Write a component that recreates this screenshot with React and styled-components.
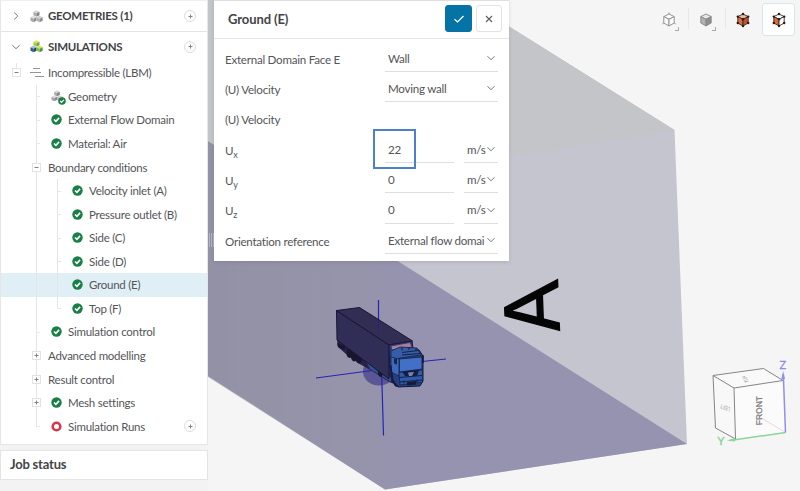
import React from "react";
import styled, { createGlobalStyle, css } from "styled-components";

const GlobalStyle = createGlobalStyle`
  * { box-sizing: border-box; }
  html, body { margin: 0; padding: 0; }
  body {
    font-family: Lato, "Liberation Sans", sans-serif;
    font-size: 11.5px;
    letter-spacing: -0.25px;
    color: #555559;
    background: #f5f5f5;
  }
`;

const Workbench = styled.div`
  position: relative;
  display: flex;
  width: 800px;
  height: 491px;
  overflow: hidden;
  background: #f5f5f5;
`;

/* ---------- sidebar ---------- */

const Sidebar = styled.aside`
  position: relative;
  display: flex;
  flex-direction: column;
  gap: 5px;
  width: 208px;
  height: 100%;
  background: #f3f3f3;
`;

const TreePanel = styled.section`
  height: 445px;
  background: #fff;
  border: 1px solid #e6e6e7;
  border-top-color: #eeeeef;
`;

const JobPanel = styled.section`
  display: flex;
  align-items: center;
  height: 30px;
  padding: 0 8px 2px 9px;
  background: #fff;
  border: 1px solid #e4e4e5;
  font-size: 13px;
  font-weight: 700;
  letter-spacing: -0.2px;
  color: #434347;
`;

const SectionHeader = styled.header`
  display: flex;
  align-items: center;
  height: ${(p) => (p.$divided ? 31 : 29)}px;
  padding-right: 11px;
  border-bottom: ${(p) => (p.$divided ? "1px solid #e4e4e6" : "0")};
  font-weight: 700;
  color: #434347;
`;

const HeaderToggle = styled.span`
  display: flex;
  justify-content: center;
  width: 29px;
`;

const HeaderIcon = styled.span`
  display: flex;
  width: 18px;
`;

const HeaderLabel = styled.span`
  flex: 1;
  padding-bottom: 1px;
`;

const AddCircle = styled.span`
  display: flex;
  align-items: center;
  justify-content: center;
  width: 12px;
  height: 12px;
  border: 1px solid #dcdcde;
  border-radius: 50%;
`;

const TreeBody = styled.div`
  display: flex;
  flex-direction: column;
`;

const TreeRow = styled.div`
  display: flex;
  align-items: center;
  height: 23.57px;
  padding-right: 11px;
  background: ${(p) => (p.$selected ? "#e0eff5" : "transparent")};
`;

const Guide = styled.span`
  position: relative;
  display: flex;
  align-items: center;
  justify-content: center;
  width: ${(p) => p.$width}px;
  height: 100%;
  padding: 0 ${(p) => p.$padRight || 0}px 0 ${(p) => p.$padLeft || 0}px;
  ${(p) =>
    p.$line &&
    css`
      &::before {
        content: "";
        position: absolute;
        left: ${p.$at}px;
        top: ${p.$line === "stub" ? "2px" : "0"};
        bottom: ${p.$line === "full" ? "0" : "50%"};
        width: 1px;
        background: #e4e5e7;
      }
    `}
  ${(p) =>
    p.$tick &&
    css`
      &::after {
        content: "";
        position: absolute;
        left: ${p.$at}px;
        top: 50%;
        width: 4px;
        height: 1px;
        background: #e6e7e9;
      }
    `}
`;

const Expander = styled.span`
  position: relative;
  z-index: 1;
  display: flex;
  align-items: center;
  justify-content: center;
  width: 9px;
  height: 9px;
  background: #fff;
  border: 1px solid #e1e2e4;
`;

const StatusSlot = styled.span`
  display: flex;
  width: ${(p) => p.$width || 17}px;
`;

const RowLabel = styled.span`
  flex: 1;
  margin-left: ${(p) => (p.$tight ? -3 : 0)}px;
  white-space: nowrap;
`;

/* ---------- settings panel ---------- */

const ResizeGutter = styled.div`
  position: relative;
  display: flex;
  align-items: center;
  justify-content: center;
  gap: 1px;
  width: 6px;
  height: 480px;
`;

const GripBar = styled.i`
  width: 1px;
  height: 14px;
  background: #b3b3c1;
`;

const SettingsPanel = styled.section`
  position: relative;
  width: 294.5px;
  height: 261px;
  background: #fff;
  border-top: 1px solid #dfdfe1;
  box-shadow: 0 1px 4px rgba(60, 60, 80, 0.16);
`;

const PanelHeader = styled.header`
  display: flex;
  align-items: center;
  gap: 4px;
  height: 38px;
  padding: 0 6.5px 2px 14px;
  border-bottom: 1px solid #e6e6e8;
`;

const PanelTitle = styled.h2`
  flex: 1;
  margin: 0;
  font-size: 13px;
  font-weight: 700;
  letter-spacing: -0.1px;
  color: #434347;
`;

const ActionButton = styled.button`
  display: flex;
  align-items: center;
  justify-content: center;
  width: ${(p) => (p.$primary ? 27 : 26)}px;
  height: 27px;
  padding: 0;
  border: 1px solid ${(p) => (p.$primary ? "#0673a6" : "#e3e3e5")};
  border-radius: 3px;
  background: ${(p) => (p.$primary ? "#0673a6" : "#fff")};
`;

const Form = styled.div`
  padding: 5px 10px 0 11px;
`;

const FieldRow = styled.div`
  display: flex;
  height: 30.35px;
`;

const FieldLabel = styled.label`
  width: 160px;
  padding-top: 7.5px;
  font-size: 11.6px;
  line-height: 16px;
  sub {
    font-size: 9px;
    line-height: 0;
    vertical-align: -3px;
  }
`;

const Control = styled.div`
  position: relative;
  display: flex;
  align-items: center;
  width: ${(p) => p.$width}px;
  height: 28px;
  margin-right: ${(p) => p.$gap || 0}px;
  padding: 1px 3px 0 3px;
  border-bottom: 1px solid #dfdfe1;
  font-size: 11.6px;
`;

const ControlText = styled.span`
  flex: 1;
  white-space: nowrap;
`;

const HighlightBox = styled.span`
  position: absolute;
  left: -12px;
  top: -6px;
  width: 43px;
  height: 40px;
  border: 2px solid #4d80cc;
`;

/* ---------- viewport ---------- */

const SceneCanvas = styled.svg`
  position: absolute;
  left: 0;
  top: 0;
`;

const ViewTools = styled.nav`
  position: relative;
  display: flex;
  align-items: flex-start;
  margin-left: auto;
  padding: 3px 5px 0 0;
  height: 40px;
`;

const ToolButton = styled.span`
  position: relative;
  display: flex;
  align-items: center;
  justify-content: center;
  width: ${(p) => (p.$active ? 33 : 37)}px;
  height: 33px;
  margin-left: ${(p) => (p.$active ? 1 : 0)}px;
  border: 1px solid ${(p) => (p.$active ? "#d7e6e9" : "transparent")};
  border-radius: 3px;
  background: ${(p) => (p.$active ? "#fdfefe" : "transparent")};
`;

const ToolDivider = styled.i`
  width: 1px;
  height: 21px;
  margin: 5px -2px 0 1px;
  background: #e8e8ea;
`;

const MenuCorner = styled.i`
  position: absolute;
  right: 7px;
  bottom: 4px;
  width: 4px;
  height: 4px;
  border: solid #aaaaad;
  border-width: 0 1px 1px 0;
`;

/* ---------- icons ---------- */

const Chevron = ({ dir = "down", size = 8 }) => (
  <svg width={size} height={size} viewBox="0 0 8 8" fill="none" stroke="#77777b" strokeWidth="1">
    <path d={dir === "right" ? "M2.2 0.5 5.8 4 2.2 7.5" : "M0.5 2.2 4 5.8 7.5 2.2"} />
  </svg>
);

const Plus = ({ minus }) => (
  <svg width="5" height="5" viewBox="0 0 5 5" stroke="#838387" strokeWidth="1">
    <path d={minus ? "M0.5 2.5h4" : "M0.5 2.5h4M2.5 0.5v4"} />
  </svg>
);

const palettes = {
  grey: [["#d6d6d8", "#aaaaad", "#858588"], ["#dedee0", "#a8a8ab", "#8c8c90"], ["#d2d2d4", "#b1b1b4", "#8e8e92"]],
  color: [["#e2e454", "#a9c83a", "#6fa840"], ["#8fc4d0", "#275e86", "#174366"], ["#dbe052", "#8cbd3c", "#4d9846"]],
};

const Cubes = ({ tone, size = 13 }) => {
  const spots = [[6.5, 3.3], [3.5, 8.7], [9.7, 8.7]];
  return (
    <svg width={size} height={size} viewBox="0 0 13 13">
      {spots.map(([x, y], i) => {
        const [top, left, right] = palettes[tone][i];
        return (
          <g key={i} transform={`translate(${x} ${y})`}>
            <path d="M-3-1.5 0-3 3-1.5 0 0z" fill={top} />
            <path d="M-3-1.5 0 0V3.5L-3 2z" fill={left} />
            <path d="M3-1.5 0 0V3.5L3 2z" fill={right} />
          </g>
        );
      })}
    </svg>
  );
};

const Check = ({ size = 11 }) => (
  <svg width={size} height={size} viewBox="0 0 11 11">
    <circle cx="5.5" cy="5.5" r="5.2" fill="#187f45" />
    <path d="M3 5.5 4.9 7.3 8.1 3.9" fill="none" stroke="#fff" strokeWidth="1.6" />
  </svg>
);

const Ring = () => (
  <svg width="11" height="11" viewBox="0 0 11 11">
    <circle cx="5.5" cy="5.5" r="3.8" fill="#fff" stroke="#d73747" strokeWidth="2.6" />
  </svg>
);

const FlowLines = () => (
  <svg width="14" height="9" viewBox="0 0 14 9" stroke="#949498" strokeWidth="1">
    <path d="M3 0.5h7M0 4.5h11M5 8.5h9" />
  </svg>
);

const GeometryChecked = () => (
  <svg width="16" height="17" viewBox="0 0 16 17">
    <g transform="translate(0 2)">
      <Cubes tone="grey" size={12} />
    </g>
    <svg x="7" y="9" width="8" height="8" viewBox="0 0 11 11">
      <Check />
    </svg>
  </svg>
);

const cubeFaces = {
  wire: ["#fafafa", "#fafafa", "#fafafa"],
  solid: ["#e6e6e7", "#b2b2b5", "#8e8e91"],
  volume: ["#edb8a0", "#dc6c3f", "#c65126"],
  face: ["#ffffff", "#db6836", "#ffffff"],
};

const CubeIcon = ({ kind }) => {
  const [top, left, right] = cubeFaces[kind];
  const dark = kind === "volume" || kind === "face";
  const line = dark ? "#3b2a27" : "#88888b";
  const pts = [[8, 2], [13.2, 4.6], [13.2, 11], [8, 14], [2.8, 11], [2.8, 4.6], [8, 7.3]];
  return (
    <svg width="16" height="16" viewBox="0 0 16 16">
      <g stroke={line} strokeWidth="0.9" strokeLinejoin="round">
        <path d="M8 2 13.2 4.6 8 7.3 2.8 4.6z" fill={top} />
        <path d="M2.8 4.6 8 7.3V14L2.8 11z" fill={left} />
        <path d="M13.2 4.6 8 7.3V14L13.2 11z" fill={right} />
      </g>
      {dark && pts.map(([x, y]) => <circle key={`${x}-${y}`} cx={x} cy={y} r="1.2" fill="#241b1b" />)}
      {kind === "wire" && (
        <path d="M8 0.5V2M1.2 12 2.8 11M14.8 12 13.2 11" stroke={line} strokeWidth="0.9" />
      )}
    </svg>
  );
};

/* ---------- 3D scene ---------- */

const Truck = () => (
  <g strokeLinejoin="round">
    <ellipse cx="379" cy="371.5" rx="16" ry="14" fill="#4b478f" opacity="0.8" />
    <path d="M378.5 300V331M316 378 376 370M422 361.5 446 359M381.5 368 383.5 435.5" stroke="#2923b5" strokeWidth="1.2" fill="none" />
    <path d="M337 340 341 337 392 375 397 385 389 382 372 371 358 363 346 354 338 347z" fill="#262346" />
    <path d="M366 361 391 377V382L370 369z" fill="#35518f" />
    <g fill="#171630">
      <ellipse cx="349.5" cy="353" rx="3" ry="5" />
      <ellipse cx="354" cy="356.5" rx="3" ry="5" />
      <ellipse cx="359" cy="358.5" rx="3" ry="5" />
      <ellipse cx="380.5" cy="371" rx="2.7" ry="6" />
      <ellipse cx="397" cy="382" rx="3.5" ry="5" />
      <path d="M337 343 345 346V350L338 347z" />
    </g>
    <path d="M336.5 310.5 389 345V379L337 340z" fill="#302d56" stroke="#191733" />
    <path d="M336.5 310.5 359.5 307.5 412.5 341 389 345z" fill="#322d52" stroke="#191733" />
    <path d="M378.5 320V330" stroke="#241c90" strokeWidth="1" />
    <path d="M389 345 412 341 413 348 419 350 423 356V381L420 386 398 387 390 376z" fill="#253e80" stroke="#16193b" />
    <path d="M391 346 410 342.5 412 347 392 350z" fill="#a67e9e" stroke="#3e3157" strokeWidth="0.7" />
    <path d="M391 351 400 347 417 348 421 355 400 358 391 361z" fill="#355da9" stroke="#172348" strokeWidth="0.8" />
    <path d="M391 357 399 359V376L391 372z" fill="#3e68bd" stroke="#172348" strokeWidth="0.8" />
    <path d="M394 358.5h3v6l-3-1z" fill="#17254f" />
    <path d="M399.5 359 422 357V369L399.5 372z" fill="#4170c6" stroke="#172348" strokeWidth="0.8" />
    <path d="M402 352.5 418 350.5M402 355 420 353.5M402 347.5v3M409 347v3M416 348v3" stroke="#15203f" strokeWidth="1" />
    <path d="M399 372.5 422.5 370V382L400 385z" fill="#315aa9" stroke="#172348" strokeWidth="0.8" />
    <path d="M402 371.5 419 370 417 376H405z" fill="#171d3f" />
    <path d="M408 372.5 414 372 412 376H409z" fill="#7186b9" />
    <path d="M399 377.5 422 375.5M400 382 422 380M404 380.5v3M417 379.5v3" stroke="#142149" strokeWidth="1.1" />
    <path d="M407 382 416 381V384.5L407 385.5z" fill="#171b36" />
    <path d="M422.8 355V363M390.5 365 393 383" stroke="#151b3a" strokeWidth="1.8" />
  </g>
);

const ViewCube = () => (
  <g fontFamily="Lato, sans-serif" letterSpacing="0">
    <path d="M713 375.5 763.5 368.5 783 380.5 734 388z" fill="#f9f9f9" />
    <path d="M713 375.5 734 388 735.5 439 715.5 428z" fill="#f8f8f8" />
    <path d="M734 388 783 380.5 785.5 432.5 735.5 439z" fill="#fbfbfb" />
    <path d="M785 432 761 418" stroke="#efd5d9" />
    <path d="M713 375.5 763.5 368.5 783 380.5 734 388zM734 388 735.5 439 715.5 428 713 375.5" fill="none" stroke="#858585" strokeWidth="1" />
    <path d="M785.5 432.5 730 440.5" stroke="#8bd69a" strokeWidth="1.5" />
    <path d="M783.3 374 785.5 432.5" stroke="#8f8fee" strokeWidth="1.5" />
    <path d="M781.3 379 783.2 371 785 379z" fill="#8f8fee" />
    <path d="M727 440.5 735 438V441.5z" fill="#8bd69a" />
    <text x="779.5" y="369" fontSize="11" fill="#8c8ce6" stroke="#8c8ce6" strokeWidth="0.3">Z</text>
    <text x="717.5" y="445" fontSize="11" fill="#86d096" stroke="#86d096" strokeWidth="0.3">Y</text>
    <text transform="matrix(0 -1 .98 -.08 762 425)" fontFamily="Liberation Sans" fontSize="8.5" fill="#77777a" stroke="#77777a" strokeWidth="0.25">FRONT</text>
    <text transform="matrix(-.72 -.3 .1 -1.15 730 407.5)" fontFamily="Liberation Sans" fontSize="5.5" fill="#a0a0a3">LEFT</text>
    <text transform="matrix(-.25 -.55 .95 -.2 749 382)" fontFamily="Liberation Sans" fontSize="6" fill="#98989b">TOP</text>
  </g>
);

const Scene = () => (
  <SceneCanvas width="800" height="491" viewBox="0 0 800 491">
    <defs>
      <linearGradient id="floor" gradientUnits="userSpaceOnUse" x1="208" y1="0" x2="450" y2="0">
        <stop offset="0" stopColor="#9291a5" />
        <stop offset="0.6" stopColor="#9594aa" />
        <stop offset="0.85" stopColor="#9593b0" />
        <stop offset="1" stopColor="#9593b0" />
      </linearGradient>
    </defs>
    <path d="M200 0H467L674.5 130 687 444 385 489.5 200 372z" fill="#c5c5cf" />
    <path d="M200 0H467L674.5 130 508 157 200 200z" fill="#c4c5c8" />
    <path d="M200 136 687 444 385 489.5 200 371z" fill="url(#floor)" />
    <text transform="matrix(-.03 -.765 .78 -.099 559.6 330.5)" fontFamily="Liberation Sans" fontSize="100" letterSpacing="0" fill="#050505" stroke="#050505" strokeWidth="1.8">A</text>
    <Truck />
    <ViewCube />
  </SceneCanvas>
);

/* ---------- data ---------- */

const treeRows = [
  { label: "Incompressible (LBM)", level: 0, box: "minus", icon: "flow" },
  { label: "Geometry", level: 1, icon: "geometry" },
  { label: "External Flow Domain", level: 1, icon: "check" },
  { label: "Material: Air", level: 1, icon: "check" },
  { label: "Boundary conditions", level: 1, box: "minus" },
  { label: "Velocity inlet (A)", level: 2, icon: "check" },
  { label: "Pressure outlet (B)", level: 2, icon: "check" },
  { label: "Side (C)", level: 2, icon: "check" },
  { label: "Side (D)", level: 2, icon: "check" },
  { label: "Ground (E)", level: 2, icon: "check", selected: true },
  { label: "Top (F)", level: 2, icon: "check", last: true },
  { label: "Simulation control", level: 1, icon: "check" },
  { label: "Advanced modelling", level: 1, box: "plus" },
  { label: "Result control", level: 1, box: "plus" },
  { label: "Mesh settings", level: 1, box: "plus", icon: "check" },
  { label: "Simulation Runs", level: 1, icon: "ring", last: true, addable: true },
];

const rowIcons = { check: <Check />, ring: <Ring />, geometry: <GeometryChecked />, flow: <FlowLines /> };

const Box = ({ kind }) => (
  <Expander>
    <Plus minus={kind === "minus"} />
  </Expander>
);

const TreeItem = ({ row }) => (
  <TreeRow $selected={row.selected}>
    {row.level === 0 ? (
      <Guide $width={29} $padLeft={1} $at={15} $line="stub">
        <Box kind={row.box} />
      </Guide>
    ) : (
      <>
        <Guide $width={22} />
        <Guide
          $width={28}
          $padRight={1}
          $at={13}
          $line={row.last && row.level === 1 ? "end" : "full"}
          $tick={row.level === 1}
        >
          {row.box && <Box kind={row.box} />}
        </Guide>
      </>
    )}
    {row.level === 2 && <Guide $width={21} $at={6} $line={row.last ? "end" : "full"} $tick />}
    {row.icon && <StatusSlot $width={row.level === 0 ? 18 : 17}>{rowIcons[row.icon]}</StatusSlot>}
    <RowLabel $tight={!row.icon}>{row.label}</RowLabel>
    {row.addable && (
      <AddCircle>
        <Plus />
      </AddCircle>
    )}
  </TreeRow>
);

const Select = ({ width, children }) => (
  <Control $width={width}>
    <ControlText>{children}</ControlText>
    <Chevron size={8} />
  </Control>
);

const VelocityField = ({ axis, value, highlighted }) => (
  <FieldRow>
    <FieldLabel>
      U<sub>{axis}</sub>
    </FieldLabel>
    <Control $width={69} $gap={10}>
      <ControlText>{value}</ControlText>
      {highlighted && <HighlightBox />}
    </Control>
    <Select width={34}>m/s</Select>
  </FieldRow>
);

export default function App() {
  return (
    <>
      <GlobalStyle />
      <Workbench>
        <Scene />
        <Sidebar>
          <TreePanel>
            <SectionHeader $divided>
              <HeaderToggle><Chevron dir="right" /></HeaderToggle>
              <HeaderIcon><Cubes tone="grey" /></HeaderIcon>
              <HeaderLabel>GEOMETRIES (1)</HeaderLabel>
              <AddCircle><Plus /></AddCircle>
            </SectionHeader>
            <SectionHeader>
              <HeaderToggle><Chevron /></HeaderToggle>
              <HeaderIcon><Cubes tone="color" /></HeaderIcon>
              <HeaderLabel>SIMULATIONS</HeaderLabel>
              <AddCircle><Plus /></AddCircle>
            </SectionHeader>
            <TreeBody>
              {treeRows.map((row) => (
                <TreeItem key={row.label} row={row} />
              ))}
            </TreeBody>
          </TreePanel>
          <JobPanel>Job status</JobPanel>
        </Sidebar>
        <ResizeGutter>
          <GripBar />
          <GripBar />
          <GripBar />
        </ResizeGutter>
        <SettingsPanel>
          <PanelHeader>
            <PanelTitle>Ground (E)</PanelTitle>
            <ActionButton $primary aria-label="Apply">
              <svg width="12" height="12" viewBox="0 0 12 12" fill="none" stroke="#fff" strokeWidth="1.2">
                <path d="M1.5 6.3 4.5 9 10.5 3" />
              </svg>
            </ActionButton>
            <ActionButton aria-label="Close">
              <svg width="8" height="8" viewBox="0 0 8 8" stroke="#5c5c60" strokeWidth="1.1">
                <path d="M1 1 7 7M7 1 1 7" />
              </svg>
            </ActionButton>
          </PanelHeader>
          <Form>
            <FieldRow>
              <FieldLabel>External Domain Face E</FieldLabel>
              <Select width={113}>Wall</Select>
            </FieldRow>
            <FieldRow>
              <FieldLabel>(U) Velocity</FieldLabel>
              <Select width={113}>Moving wall</Select>
            </FieldRow>
            <FieldRow>
              <FieldLabel>(U) Velocity</FieldLabel>
            </FieldRow>
            <VelocityField axis="x" value="22" highlighted />
            <VelocityField axis="y" value="0" />
            <VelocityField axis="z" value="0" />
            <FieldRow>
              <FieldLabel>Orientation reference</FieldLabel>
              <Select width={113}>External flow domai</Select>
            </FieldRow>
          </Form>
        </SettingsPanel>
        <ViewTools>
          <ToolButton><CubeIcon kind="wire" /><MenuCorner /></ToolButton>
          <ToolDivider />
          <ToolButton><CubeIcon kind="solid" /><MenuCorner /></ToolButton>
          <ToolDivider />
          <ToolButton><CubeIcon kind="volume" /></ToolButton>
          <ToolButton $active><CubeIcon kind="face" /></ToolButton>
        </ViewTools>
      </Workbench>
    </>
  );
}
